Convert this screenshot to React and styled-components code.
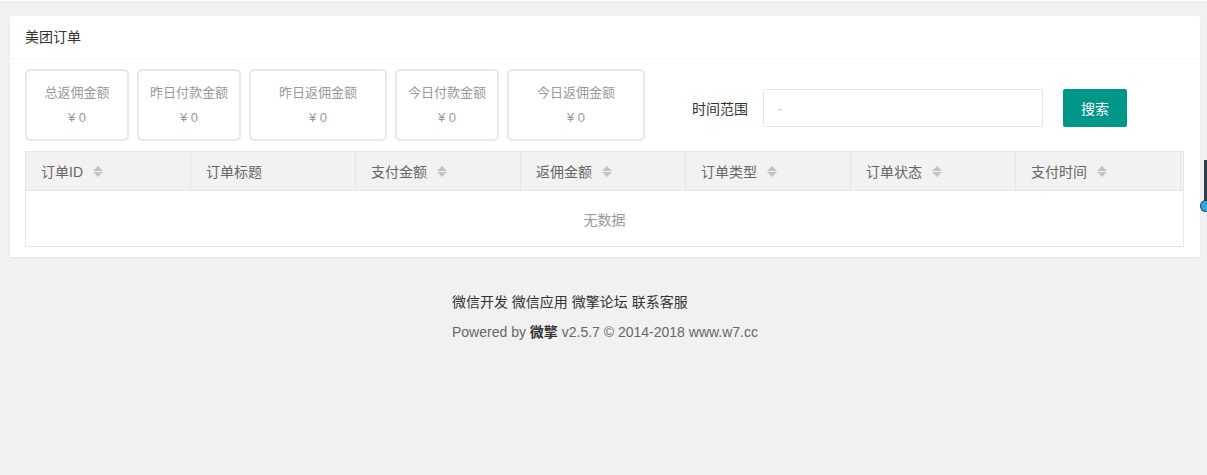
import React from "react";
import styled, { createGlobalStyle } from "styled-components";

const Global = createGlobalStyle`
  html, body { margin: 0; padding: 0; }
  body {
    background: #f1f1f1;
    font-family: "Helvetica Neue", "Liberation Sans", Arial, "Noto Sans CJK SC", sans-serif;
    font-size: 14px;
    color: #333;
  }
`;

const Page = styled.div`
  position: relative;
  min-height: 475px;
`;

const TopStrip = styled.div`
  height: 2px;
  background: #f9f9f9;
  border-bottom: 1px solid #e3e3e3;
`;

const Main = styled.div`
  padding: 13px 7px 0 10px;
`;

const Card = styled.div`
  background: #fff;
  border-radius: 2px;
  box-shadow: 0 1px 2px rgba(0, 0, 0, 0.05);
`;

const CardHeader = styled.div`
  height: 42px;
  line-height: 42px;
  padding: 0 15px;
  border-bottom: 1px solid #f6f6f6;
  font-size: 14px;
  color: #333;
`;

const CardBody = styled.div`
  padding: 10px 16px 10px 15px;
`;

const Toolbar = styled.div`
  display: flex;
  align-items: center;
`;

const Stats = styled.div`
  display: flex;
  gap: 8px;
`;

const StatBox = styled.div`
  box-sizing: border-box;
  width: ${(p) => p.$w}px;
  height: 72px;
  border: 2px solid #e8e8e8;
  border-radius: 5px;
  display: flex;
  flex-direction: column;
  align-items: center;
  justify-content: center;
  gap: 6px;
  color: #999;
  font-size: 13px;
  line-height: 19px;
`;

const FormGroup = styled.div`
  display: flex;
  align-items: center;
  margin-left: 47px;
  margin-top: 6px;
`;

const Label = styled.span`
  font-size: 14px;
  color: #333;
  width: 71px;
`;

const Input = styled.div`
  box-sizing: border-box;
  width: 280px;
  height: 38px;
  border: 1px solid #e6e6e6;
  border-radius: 2px;
  padding-left: 14px;
  display: flex;
  align-items: center;
  color: #c8c8c8;
  font-size: 13px;
`;

const Button = styled.button`
  margin-left: 20px;
  width: 64px;
  height: 38px;
  border: none;
  border-radius: 2px;
  background: #009688;
  color: #fff;
  font-family: inherit;
  font-size: 14px;
  padding: 0;
`;

const Table = styled.div`
  margin-top: 10px;
  border: 1px solid #e6e6e6;
`;

const HeadRow = styled.div`
  display: grid;
  grid-template-columns: repeat(7, 165px) 1fr;
  background: #f2f2f2;
  border-bottom: 1px solid #e6e6e6;
  height: 38px;
`;

const HeadCell = styled.div`
  display: flex;
  align-items: center;
  padding-left: 15px;
  color: #666;
  font-size: 14px;
  border-right: 1px solid #e6e6e6;
  &:last-child { border-right: none; padding: 0; }
`;

const SortWrap = styled.span`
  display: inline-flex;
  flex-direction: column;
  gap: 1px;
  margin-left: 10px;
`;

const Tri = styled.span`
  width: 0;
  height: 0;
  border-left: 5px solid transparent;
  border-right: 5px solid transparent;
  ${(p) =>
    p.$up
      ? "border-bottom: 5px solid #c2c2c2;"
      : "border-top: 5px solid #c2c2c2;"}
`;

const Empty = styled.div`
  height: 55px;
  display: flex;
  align-items: center;
  justify-content: center;
  color: #999;
  font-size: 14px;
`;

const Footer = styled.div`
  padding-top: 35px;
  text-align: center;
`;

const FooterInner = styled.div`
  display: inline-block;
  text-align: left;
`;

const Links = styled.div`
  color: #333;
  font-size: 14px;
  line-height: 20px;
`;

const Powered = styled.div`
  margin-top: 10px;
  color: #666;
  font-size: 14px;
  line-height: 20px;
  b { color: #333; }
`;

const SideWidget = styled.div`
  position: absolute;
  right: 0;
  top: 160px;
  width: 3px;
  height: 45px;
  background: #2e3d4c;
  &::after {
    content: "";
    position: absolute;
    left: -3px;
    bottom: -6px;
    width: 9px;
    height: 10px;
    border-radius: 50%;
    background: #29a9e6;
    box-shadow: 0 0 0 1px #2e3d4c;
  }
`;

const stats = [
  { label: "总返佣金额", w: 104 },
  { label: "昨日付款金额", w: 104 },
  { label: "昨日返佣金额", w: 138 },
  { label: "今日付款金额", w: 104 },
  { label: "今日返佣金额", w: 138 },
];

const cols = [
  { t: "订单ID", s: true },
  { t: "订单标题", s: false },
  { t: "支付金额", s: true },
  { t: "返佣金额", s: true },
  { t: "订单类型", s: true },
  { t: "订单状态", s: true },
  { t: "支付时间", s: true },
];

const Sort = () => (
  <SortWrap>
    <Tri $up />
    <Tri />
  </SortWrap>
);

export default function App() {
  return (
    <Page>
      <Global />
      <TopStrip />
      <Main>
        <Card>
          <CardHeader>美团订单</CardHeader>
          <CardBody>
            <Toolbar>
              <Stats>
                {stats.map((s) => (
                  <StatBox key={s.label} $w={s.w}>
                    <span>{s.label}</span>
                    <span>¥ 0</span>
                  </StatBox>
                ))}
              </Stats>
              <FormGroup>
                <Label>时间范围</Label>
                <Input>-</Input>
                <Button>搜索</Button>
              </FormGroup>
            </Toolbar>
            <Table>
              <HeadRow>
                {cols.map((c) => (
                  <HeadCell key={c.t}>
                    {c.t}
                    {c.s && <Sort />}
                  </HeadCell>
                ))}
                <HeadCell />
              </HeadRow>
              <Empty>无数据</Empty>
            </Table>
          </CardBody>
        </Card>
        <Footer>
          <FooterInner>
            <Links>微信开发 微信应用 微擎论坛 联系客服</Links>
            <Powered>
              Powered by <b>微擎</b> v2.5.7 © 2014-2018 www.w7.cc
            </Powered>
          </FooterInner>
        </Footer>
      </Main>
      <SideWidget />
    </Page>
  );
}
